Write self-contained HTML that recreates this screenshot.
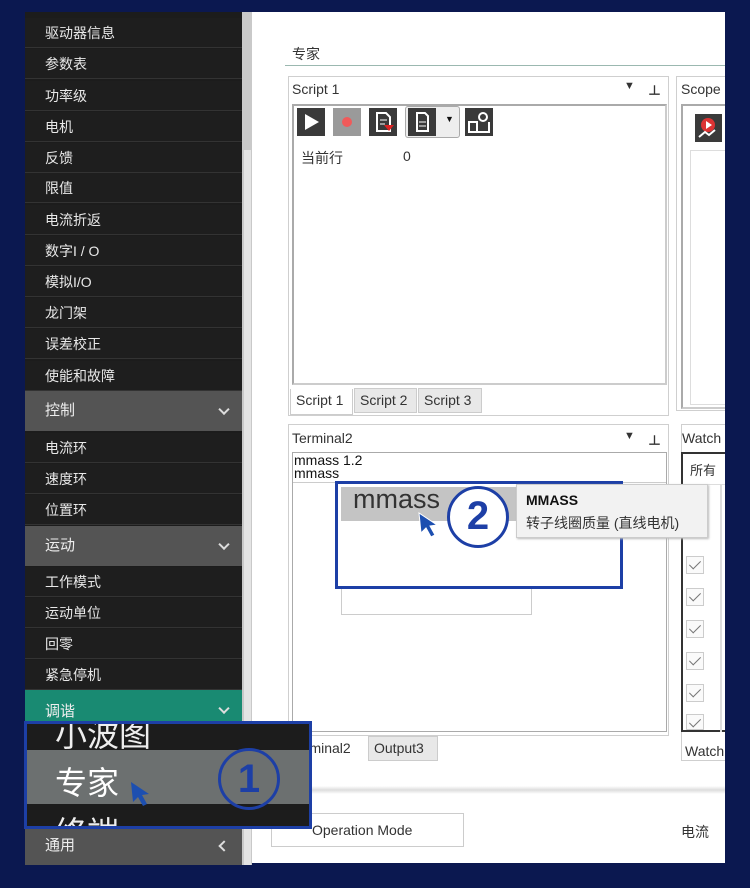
<!DOCTYPE html>
<html><head><meta charset="utf-8"><style>
*{margin:0;padding:0;box-sizing:border-box}
body{width:750px;height:888px;background:#0b1850;position:relative;overflow:hidden;font-family:"Liberation Sans","Noto Sans CJK SC",sans-serif}
.a{position:absolute}
.side{left:25px;top:12px;width:217px;height:853px;background:#1c1c1c}
.row{position:absolute;left:25px;width:217px;height:30px;background:#1e1e1e;color:#e8e8e8;font-size:14px;line-height:30px;padding-left:20px;border-bottom:1px solid #333}
.hdr{position:absolute;left:25px;width:217px;background:#545454;color:#eee;font-size:15px;padding-left:20px}
.chev{position:absolute;right:14px;top:50%;width:8px;height:8px;border-right:2px solid #ddd;border-bottom:2px solid #ddd;transform:translateY(-70%) rotate(45deg)}
.main{left:252px;top:12px;width:473px;height:851px;background:#fff}
.t{position:absolute;font-size:14px;color:#333;white-space:nowrap}
.box{position:absolute;border:1px solid #cfcfcf}
.ib{position:absolute;border:2px solid #aaa;border-right-color:#ccc;border-bottom-color:#ccc}
.ic{position:absolute;width:28px;height:28px;background:#3a3a3a}
.tab{position:absolute;height:25px;background:#e8e8e8;border:1px solid #ccc;font-size:14px;color:#333;line-height:23px;padding-left:5px}
.chk{position:absolute;left:686px;width:18px;height:18px;border:1px solid #ccc;background:#fafafa}
.chk:after{content:"";position:absolute;left:5px;top:1px;width:5px;height:10px;border-right:1.5px solid #777;border-bottom:1.5px solid #777;transform:rotate(45deg)}
</style></head><body>
<div class="a side"></div>
<div class="a" style="left:242px;top:12px;width:10px;height:853px;background:#c9c9c9"></div>
<div class="a" style="left:244px;top:150px;width:7px;height:715px;background:#e4e4e4"></div>
<div class="row" style="top:18px">驱动器信息</div>
<div class="row" style="top:49px">参数表</div>
<div class="row" style="top:81px">功率级</div>
<div class="row" style="top:112px">电机</div>
<div class="row" style="top:143px">反馈</div>
<div class="row" style="top:173px">限值</div>
<div class="row" style="top:205px">电流折返</div>
<div class="row" style="top:236px">数字I / O</div>
<div class="row" style="top:267px">模拟I/O</div>
<div class="row" style="top:298px">龙门架</div>
<div class="row" style="top:329px">误差校正</div>
<div class="row" style="top:361px">使能和故障</div>
<div class="hdr" style="top:391px;height:40px;line-height:40px">控制<span class="chev"></span></div>
<div class="row" style="top:433px">电流环</div>
<div class="row" style="top:464px">速度环</div>
<div class="row" style="top:495px">位置环</div>
<div class="hdr" style="top:526px;height:40px;line-height:40px">运动<span class="chev"></span></div>
<div class="row" style="top:567px">工作模式</div>
<div class="row" style="top:598px">运动单位</div>
<div class="row" style="top:629px">回零</div>
<div class="row" style="top:660px">紧急停机</div>
<div class="hdr" style="top:690px;height:34px;line-height:44px;background:#198a72">调谐<span class="chev" style="top:60%"></span></div>
<div class="hdr" style="top:826px;height:39px;line-height:39px">通用<span class="chev" style="transform:translateY(-50%) rotate(135deg)"></span></div>

<div class="a main"></div>
<div class="t" style="left:292px;top:44px">专家</div>
<div class="a" style="left:285px;top:65px;width:440px;height:1px;background:#9bb8b0"></div>

<div class="box" style="left:288px;top:76px;width:381px;height:340px"></div>
<div class="t" style="left:292px;top:81px">Script 1</div>
<div class="t" style="left:624px;top:80px;font-size:11px">▼</div>
<div class="t" style="left:648px;top:80px;font-size:13px;font-weight:bold">⊥</div>
<div class="ib" style="left:292px;top:104px;width:375px;height:281px"></div>
<div class="ic" style="left:297px;top:108px"><svg width="28" height="28"><path d="M8 6L22 14L8 22Z" fill="#fff"/></svg></div>
<div class="ic" style="left:333px;top:108px;background:#9a9a9a"><div class="a" style="left:9px;top:9px;width:10px;height:10px;border-radius:5px;background:#f05a5a"></div></div>
<div class="ic" style="left:369px;top:108px"><svg width="28" height="28"><path d="M8 5h9l4 4v14H8z" fill="none" stroke="#fff" stroke-width="2"/><path d="M11 12h7M11 16h5" stroke="#fff"/><path d="M15 17l5 6 5-6z" fill="#d22"/></svg></div>
<div class="a" style="left:405px;top:106px;width:55px;height:32px;border:1px solid #aaa;border-radius:3px;background:#eee"></div>
<div class="ic" style="left:408px;top:108px"><svg width="28" height="28"><path d="M9 5h8l3 3v15H9z" fill="none" stroke="#fff" stroke-width="2"/><path d="M11 14h7M11 18h7" stroke="#fff"/></svg></div>
<div class="t" style="left:445px;top:114px;font-size:9px;color:#111">▼</div>
<div class="ic" style="left:465px;top:108px"><svg width="28" height="28"><path d="M4 14h8v10H4zM4 14v10h20V14" fill="none" stroke="#fff" stroke-width="2"/><circle cx="18" cy="9" r="4" fill="none" stroke="#fff" stroke-width="2"/></svg></div>
<div class="t" style="left:301px;top:148px">当前行</div>
<div class="t" style="left:403px;top:148px">0</div>
<div class="tab" style="left:290px;top:389px;background:#fff;border-top:none;width:63px;height:26px">Script 1</div>
<div class="tab" style="left:354px;top:388px;width:63px">Script 2</div>
<div class="tab" style="left:418px;top:388px;width:64px">Script 3</div>

<div class="box" style="left:676px;top:76px;width:60px;height:335px"></div>
<div class="t" style="left:681px;top:81px">Scope</div>
<div class="ib" style="left:681px;top:104px;width:50px;height:305px"></div>
<div class="a" style="left:695px;top:114px;width:27px;height:28px;background:#3a3a3a"><svg width="27" height="28"><circle cx="13" cy="11" r="7" fill="#d33"/><path d="M11 7l6 4-6 4z" fill="#fff"/><path d="M4 23l6-5 4 3 6-5" stroke="#fff" stroke-width="2" fill="none"/></svg></div>
<div class="a" style="left:690px;top:150px;width:40px;height:255px;border:1px solid #ddd"></div>

<div class="box" style="left:288px;top:424px;width:381px;height:312px"></div>
<div class="t" style="left:292px;top:430px">Terminal2</div>
<div class="t" style="left:624px;top:430px;font-size:11px">▼</div>
<div class="t" style="left:648px;top:430px;font-size:13px;font-weight:bold">⊥</div>
<div class="a" style="left:292px;top:452px;width:375px;height:280px;border:1px solid #aaa"></div>
<div class="a" style="left:293px;top:453px;width:373px;height:30px;border-bottom:1px solid #ccc"></div>
<div class="t" style="left:294px;top:454px;color:#111;line-height:13px">mmass 1.2<br>mmass</div>
<div class="a" style="left:341px;top:588px;width:191px;height:27px;border:1px solid #ccc;background:#fff"></div>
<div class="tab" style="left:290px;top:737px;background:#fff;border:none;width:76px;padding-left:0">Terminal2</div>
<div class="tab" style="left:368px;top:736px;width:70px">Output3</div>

<div class="box" style="left:681px;top:424px;width:60px;height:337px"></div>
<div class="t" style="left:682px;top:430px">Watch</div>
<div class="a" style="left:681px;top:452px;width:50px;height:280px;border:2px solid #333;border-right:none"></div>
<div class="t" style="left:690px;top:460px;font-size:13px">所有</div>
<div class="a" style="left:683px;top:484px;width:42px;height:1px;background:#ddd"></div>
<div class="a" style="left:720px;top:484px;width:2px;height:248px;background:#ddd"></div>
<div class="chk" style="top:556px"></div><div class="chk" style="top:588px"></div><div class="chk" style="top:620px"></div><div class="chk" style="top:652px"></div><div class="chk" style="top:684px"></div><div class="chk" style="top:714px;height:16px"></div>
<div class="t" style="left:685px;top:743px">Watch</div>

<div class="a" style="left:252px;top:786px;width:473px;height:8px;background:linear-gradient(#fff,#ddd,#fff)"></div>
<div class="a" style="left:271px;top:813px;width:193px;height:34px;border:1px solid #ccc"></div>
<div class="t" style="left:312px;top:822px">Operation Mode</div>
<div class="t" style="left:681px;top:822px">电流</div>

<div class="a" style="left:725px;top:0;width:25px;height:888px;background:#0b1850"></div>

<!-- overlay 2 -->
<div class="a" style="left:335px;top:481px;width:288px;height:108px;border:3px solid #1d3fa6;background:#fff"></div>
<div class="a" style="left:341px;top:487px;width:180px;height:34px;background:#c4c4c4"></div>
<div class="t" style="left:353px;top:484px;font-size:27px;color:#333">mmass</div>
<svg class="a" style="left:415px;top:510px" width="28" height="32"><path d="M4 3L6 23L11 18L16 27L20 25L15 16L22 15Z" fill="#1d4fb0" stroke="#fff" stroke-width="1"/></svg>
<div class="a" style="left:447px;top:486px;width:62px;height:62px;border:3px solid #1d3fa6;border-radius:50%;background:#fff;text-align:center;line-height:54px;font-size:40px;font-weight:bold;color:#1d3fa6">2</div>
<div class="a" style="left:516px;top:484px;width:192px;height:54px;background:#f2f2f2;border:1px solid #ccc;box-shadow:1px 1px 2px #bbb"></div>
<div class="t" style="left:526px;top:492px;font-weight:bold;color:#111">MMASS</div>
<div class="t" style="left:526px;top:513px">转子线圈质量 (直线电机)</div>

<!-- overlay 1 -->
<div class="a" style="left:24px;top:721px;width:288px;height:108px;border:3px solid #1d3fa6;background:#1c1c1c;overflow:hidden">
<div class="a" style="left:0;top:26px;width:282px;height:54px;background:#6c7070"></div>
<div class="t" style="left:28px;top:-14px;font-size:32px;color:#eee">小波图</div>
<div class="t" style="left:28px;top:34px;font-size:32px;color:#fff">专家</div>
<div class="t" style="left:28px;top:84px;font-size:32px;color:#eee">终端</div>
<svg class="a" style="left:100px;top:55px" width="28" height="32"><path d="M4 3L6 23L11 18L16 27L20 25L15 16L22 15Z" fill="#1d4fb0"/></svg>
<div class="a" style="left:191px;top:24px;width:62px;height:62px;border:3px solid #1d3fa6;border-radius:50%;text-align:center;line-height:56px;font-size:40px;font-weight:bold;color:#1d3fa6">1</div>
</div>
</body></html>
